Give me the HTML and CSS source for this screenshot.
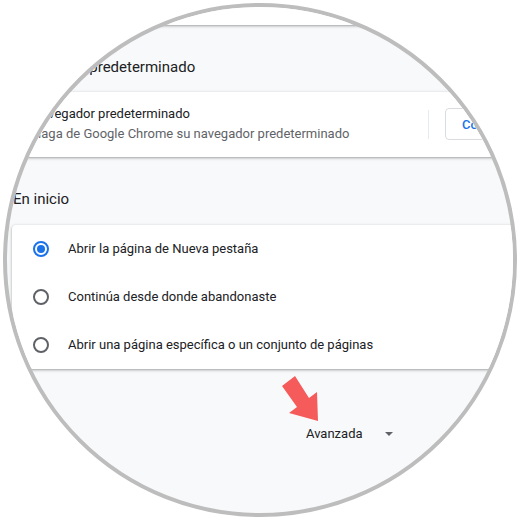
FILE: index.html
```html
<!DOCTYPE html>
<html lang="es">

<head>
    <meta charset="UTF-8">
    <meta name="viewport" content="width=device-width, initial-scale=1.0">
    <title>Configuración - En inicio</title>
    <link rel="stylesheet" href="styles.css">
</head>

<body>
    <div class="lens">
        <div class="page">
            <div class="card card-top"></div>

            <h2 class="section-title">Navegador predeterminado</h2>
            <section class="card">
                <div class="row row-default">
                    <div class="row-main">
                        <div class="row-label">Navegador predeterminado</div>
                        <div class="row-sub">Haga de Google Chrome su navegador predeterminado</div>
                    </div>
                    <div class="separator"></div>
                    <button class="action-btn">Convertir en predeterminado</button>
                </div>
            </section>

            <h2 class="section-title startup-title">En inicio</h2>
            <section class="card">
                <label class="radio-row">
                    <span class="radio checked"></span>
                    <span>Abrir la página de Nueva pestaña</span>
                </label>
                <label class="radio-row">
                    <span class="radio"></span>
                    <span>Continúa desde donde abandonaste</span>
                </label>
                <label class="radio-row">
                    <span class="radio"></span>
                    <span>Abrir una página específica o un conjunto de páginas</span>
                </label>
            </section>

            <div class="advanced">
                <span>Avanzada</span>
                <svg class="drop" width="8" height="4" viewBox="0 0 8 4">
                    <path d="M0 0h8L4 4z" fill="#5f6368" />
                </svg>
            </div>
        </div>

        <!-- red pointer drawn over the page -->
        <svg class="pointer" width="56" height="60" viewBox="0 0 56 60">
            <polygon points="12,16 25,6 39,28 47,22 48,51 19,43 27,37" fill="#f65b5b" />
        </svg>
    </div>
</body>

</html>
```

FILE: styles.css
```css
* {
    margin: 0;
    padding: 0;
    box-sizing: border-box;
}

body {
    font-family: Roboto, 'Liberation Sans', sans-serif;
    background: white;
    color: #202124;
    font-size: 13px;
}

.lens {
    position: relative;
    width: 514px;
    height: 514px;
    margin: 3px;
    border: 4px solid #bdbdbd;
    border-radius: 50%;
    overflow: hidden;
    background: #f8f9fa;
}

.page {
    width: 700px;
}

.card {
    width: 660px;
    margin-left: 5px;
    background: white;
    border-radius: 4px;
    box-shadow: 0 1px 2px rgba(60, 64, 67, 0.3), 0 1px 3px 1px rgba(60, 64, 67, 0.15);
}

.card-top {
    height: 18px;
    border-radius: 0 0 4px 4px;
}

.section-title {
    padding: 32px 0 15px 6px;
    font-size: 15px;
    font-weight: 400;
    line-height: 20px;
    color: #202124;
}

.startup-title {
    padding-bottom: 16px;
}

/* Default browser row */
.row {
    display: flex;
    align-items: center;
}

.row-default {
    padding: 12px 20px 13px 20px;
}

.row-main {
    width: 380px;
    line-height: 20px;
}

.row-sub {
    color: #5f6368;
}

.separator {
    width: 1px;
    height: 29px;
    margin: 0 16px;
    background: #e8eaed;
}

.action-btn {
    height: 32px;
    padding: 0 16px;
    border: 1px solid #dadce0;
    border-radius: 4px;
    background: white;
    color: #1a73e8;
    font-family: inherit;
    font-size: 13px;
    font-weight: 500;
    white-space: nowrap;
}

/* Startup radios */
.radio-row {
    display: flex;
    align-items: center;
    height: 48px;
    padding-left: 21px;
    line-height: 20px;
}

.radio {
    width: 16px;
    height: 16px;
    margin-right: 19px;
    border: 2px solid #5f6368;
    border-radius: 50%;
    display: flex;
    align-items: center;
    justify-content: center;
}

.radio.checked {
    border-color: #1a73e8;
}

.radio.checked::after {
    content: "";
    width: 8px;
    height: 8px;
    border-radius: 50%;
    background: #1a73e8;
}

.advanced {
    display: flex;
    align-items: center;
    padding: 55px 0 0 299px;
    line-height: 20px;
}

.drop {
    margin-left: 22px;
}

.pointer {
    position: absolute;
    left: 263px;
    top: 363px;
}
```
